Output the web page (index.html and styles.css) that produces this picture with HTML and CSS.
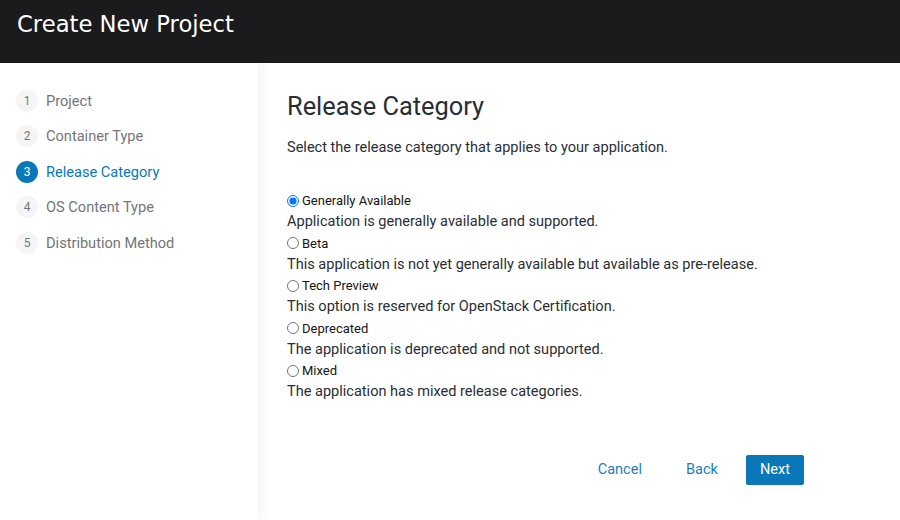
FILE: index.html
```html
<!DOCTYPE html>
<html>
<head>
<meta charset="utf-8">
<link rel="stylesheet" href="styles.css">
</head>
<body>
<header class="topbar"><h1 class="title">Create New Project</h1></header>
<div class="layout">
  <nav class="sidebar">
    <ol class="steps">
      <li class="step"><span class="num">1</span><span class="label">Project</span></li>
      <li class="step"><span class="num">2</span><span class="label">Container Type</span></li>
      <li class="step active"><span class="num">3</span><span class="label">Release Category</span></li>
      <li class="step"><span class="num">4</span><span class="label">OS Content Type</span></li>
      <li class="step"><span class="num">5</span><span class="label">Distribution Method</span></li>
    </ol>
  </nav>
  <main class="main">
    <h2 class="heading">Release Category</h2>
    <p class="intro">Select the release category that applies to your application.</p>
    <div class="options">
      <div class="option">
        <label class="radio"><input type="radio" name="cat" checked> Generally Available</label>
        <div class="desc">Application is generally available and supported.</div>
      </div>
      <div class="option">
        <label class="radio"><input type="radio" name="cat"> Beta</label>
        <div class="desc">This application is not yet generally available but available as pre-release.</div>
      </div>
      <div class="option">
        <label class="radio"><input type="radio" name="cat"> Tech Preview</label>
        <div class="desc">This option is reserved for OpenStack Certification.</div>
      </div>
      <div class="option">
        <label class="radio"><input type="radio" name="cat"> Deprecated</label>
        <div class="desc">The application is deprecated and not supported.</div>
      </div>
      <div class="option">
        <label class="radio"><input type="radio" name="cat"> Mixed</label>
        <div class="desc">The application has mixed release categories.</div>
      </div>
    </div>
    <div class="actions">
      <button class="link">Cancel</button>
      <button class="link">Back</button>
      <button class="primary">Next</button>
    </div>
  </main>
</div>
</body>
</html>
```
FILE: styles.css
```css
html, body {
  margin: 0;
  padding: 0;
  height: 100%;
}
body {
  font-family: "Roboto", "Liberation Sans", sans-serif;
  color: #151515;
  background: #fff;
  display: flex;
  flex-direction: column;
}
.topbar {
  background: #1b1a1d;
  height: 63px;
  flex: none;
  box-sizing: border-box;
  padding: 9px 17px 0;
}
.title {
  margin: 0;
  font-family: "DejaVu Sans", sans-serif;
  font-weight: normal;
  font-size: 22.7px;
  line-height: 30px;
  color: #fff;
}
.layout {
  flex: 1;
  display: flex;
}
.sidebar {
  width: 258px;
  flex: none;
  background: #fff;
  box-shadow: 2px 0 12px rgba(0,0,0,0.07);
  position: relative;
  z-index: 1;
}
.steps {
  list-style: none;
  margin: 0;
  padding: 20px 0 0 16px;
}
.step {
  display: flex;
  align-items: center;
  gap: 8px;
  height: 35.5px;
  font-size: 14.6px;
  color: #72767b;
}
.num {
  width: 22px;
  height: 22px;
  border-radius: 50%;
  background: #f5f5f5;
  color: #72767b;
  font-size: 12px;
  display: flex;
  align-items: center;
  justify-content: center;
}
.step.active { color: #0a78b8; }
.step.active .num { background: #0a78b8; color: #fff; }
.main {
  flex: 1;
  padding: 28px 96px 0 29px;
  display: flex;
  flex-direction: column;
  background: #fff;
}
.heading {
  margin: 0;
  font-weight: normal;
  font-size: 25.4px;
  line-height: 30px;
  color: #292e34;
}
.intro {
  margin: 17px 0 0;
  font-size: 14.55px;
  line-height: 20px;
  color: #292e34;
}
.options {
  margin-top: 32px;
}
.option {
  height: 42.5px;
}
.radio {
  display: flex;
  align-items: center;
  gap: 3px;
  font-size: 13px;
  line-height: 21px;
  height: 21px;
  color: #151515;
}
.radio input {
  margin: 0;
  width: 12px;
  height: 12px;
}
.desc {
  font-size: 14.55px;
  line-height: 21px;
  color: #292e34;
}
.actions {
  display: flex;
  justify-content: flex-end;
  align-items: center;
  margin-top: 52px;
  gap: 0;
}
.actions button {
  font-family: inherit;
  font-size: 14.55px;
  height: 30px;
  border: none;
  border-radius: 2px;
  cursor: pointer;
}
.link {
  background: none;
  color: #1a7fbf;
  padding: 0 22px;
}
.primary {
  background: #0a78b8;
  color: #fff;
  padding: 0 14px;
  margin-left: 6px;
}
```
